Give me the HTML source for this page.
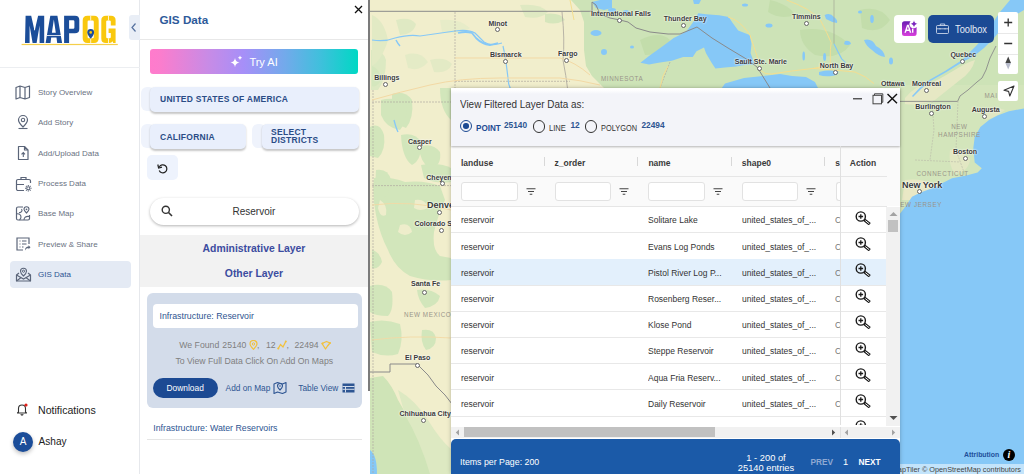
<!DOCTYPE html>
<html><head><meta charset="utf-8">
<style>
*{margin:0;padding:0;box-sizing:border-box}
html,body{width:1024px;height:474px;overflow:hidden;background:#fff;font-family:"Liberation Sans",sans-serif}
.abs{position:absolute}
#side{position:absolute;left:0;top:0;width:140px;height:474px;background:#fff;border-right:1px solid #e6e8ec}
.mi{position:absolute;left:15px;height:20px;width:120px;font-size:8px;color:#6a7282;white-space:nowrap}
.mi svg{position:absolute;left:0;top:0}
.mi span{position:absolute;left:23px;top:4px}
#panel{position:absolute;left:140px;top:0;width:228px;height:474px;background:#fff}
.btn{position:absolute;background:#e9effc;border-radius:5px;box-shadow:0 1.5px 2px rgba(0,0,0,.22);color:#2a4c86;font-weight:bold;font-size:9.7px;letter-spacing:.3px}
.btn span{transform:scaleX(.876);transform-origin:0 0;white-space:nowrap}
#map{position:absolute;left:370px;top:0;width:654px;height:474px;overflow:hidden;background:#f1ecd0}
.lbl{position:absolute;font-size:7.5px;color:#3a3a3a;font-weight:bold;white-space:nowrap;text-shadow:0 0 2px #fff,0 0 2px #fff}
.city{position:absolute;width:5px;height:5px;border:1px solid #666;background:#fff;border-radius:50%}
#dlg{position:absolute;left:451px;top:88px;width:449px;height:386px;background:#fff;box-shadow:0 0 4px rgba(0,0,0,.25)}
.th{position:absolute;top:158px;font-size:9.5px;font-weight:bold;color:#333}
.td{position:absolute;font-size:9.2px;color:#333;white-space:nowrap;transform:scaleX(.925);transform-origin:0 0;margin-top:.9px}
</style></head><body>

<!-- SIDEBAR -->
<div id="side">
  <div class="abs" style="left:0;top:67px;width:140px;height:1px;background:#eceef1"></div>
  <svg class="abs" style="left:0;top:0" width="130" height="50" viewBox="0 0 130 50">
  <path fill="#1b4d99" d="M25 43 L25.6 15.7 L31.2 15.7 L34.6 31 L38.1 15.7 L44.2 15.7 L44.2 43 L39.6 43 L39.6 25.5 L36.6 43 L32.6 43 L29.6 25.5 L29.6 43 Z"/>
  <path fill="#1b4d99" fill-rule="evenodd" d="M45.6 43 L50.3 15.7 L57.4 15.7 L62.1 43 L57.2 43 L56.5 37.5 L51.2 37.5 L50.5 43 Z M51.9 32.8 L55.8 32.8 L53.85 19.5 Z"/>
  <path fill="#1b4d99" fill-rule="evenodd" d="M64.1 43 L64.1 15.7 L75 15.7 Q79.3 15.7 79.3 20 L79.3 29 Q79.3 33.3 75 33.3 L69.1 33.3 L69.1 43 Z M69.1 20.3 L69.1 28.7 L73.2 28.7 Q74.4 28.7 74.4 27.5 L74.4 21.5 Q74.4 20.3 73.2 20.3 Z"/>
  <path fill="#f9c80e" fill-rule="evenodd" d="M87.5 15.7 L94 15.7 Q98.7 15.7 98.7 20.4 L98.7 38.3 Q98.7 43 94 43 L87.4 43 Q82.7 43 82.7 38.3 L82.7 20.4 Q82.7 15.7 87.5 15.7 Z M88.8 20.5 Q87.6 20.5 87.6 21.7 L87.6 37 Q87.6 38.2 88.8 38.2 L92.6 38.2 Q93.8 38.2 93.8 37 L93.8 21.7 Q93.8 20.5 92.6 20.5 Z"/>
  <path fill="#f9c80e" d="M106 15.7 L111 15.7 Q115.6 15.7 115.6 20.3 L115.6 25.5 L110.8 25.5 L110.8 21.6 Q110.8 20.4 109.6 20.4 L107.4 20.4 Q106.2 20.4 106.2 21.6 L106.2 37.1 Q106.2 38.3 107.4 38.3 L109.6 38.3 Q110.8 38.3 110.8 37.1 L110.8 33 L108.6 33 L108.6 28.5 L115.6 28.5 L115.6 43 L113.2 43 L112.6 41.3 Q111.6 43 109.5 43 L105.9 43 Q101.3 43 101.3 38.4 L101.3 20.3 Q101.3 15.7 106 15.7 Z"/>
  <path d="M34.6 15.7 V30 M47 35.5 H61 M90.7 15.7 V20.5 M90.7 38.2 V43 M108.5 15.7 V20.4 M108.5 38.3 V43" stroke="#fff" stroke-width=".8"/>
  <path fill="#1b4d99" d="M90.7 38.8 C88.6 36.1 87.3 34.3 87.3 32.5 A3.4 3.4 0 0 1 94.1 32.5 C94.1 34.3 92.8 36.1 90.7 38.8 Z"/>
  <circle cx="90.7" cy="32.4" r="1.3" fill="#f9c80e"/>
  <rect x="21.6" y="43.9" width="96.2" height="1.2" fill="#f5cf4a"/>
</svg>
  <div class="abs" style="left:128.5px;top:15px;width:11.5px;height:25px;background:#e9eef6;border-radius:3px 0 0 3px"></div>
  <svg class="abs" style="left:130px;top:22px" width="8" height="11" viewBox="0 0 8 11"><path d="M5.5 1.5 L2 5.5 L5.5 9.5" fill="none" stroke="#55719e" stroke-width="1.2"/></svg>

  <div class="mi" style="top:83.5px"><svg width="16" height="16" viewBox="0 0 16 16"><path d="M1 3.5 L5 2 L10 3.5 L14.5 2 V13.5 L10 15 L5 13.5 L1 15 Z M5 2 V13.5 M10 3.5 V15" fill="none" stroke="#5b6579" stroke-width="1.2" stroke-linejoin="round"/></svg><span>Story Overview</span></div>
  <div class="mi" style="top:114.3px"><svg width="16" height="16" viewBox="0 0 16 16"><path d="M8 13 C5 10 3.5 7.8 3.5 6 A4.5 4.5 0 0 1 12.5 6 C12.5 7.8 11 10 8 13 Z" fill="none" stroke="#5b6579" stroke-width="1.2"/><circle cx="8" cy="6" r="1.7" fill="none" stroke="#5b6579" stroke-width="1.1"/><path d="M3.5 14.5 H12.5" stroke="#5b6579" stroke-width="1.1"/></svg><span>Add Story</span></div>
  <div class="mi" style="top:145px"><svg width="16" height="16" viewBox="0 0 16 16"><path d="M3.5 1.5 H9.5 L13 5 V14.5 H3.5 Z M9.5 1.5 V5 H13" fill="none" stroke="#5b6579" stroke-width="1.2" stroke-linejoin="round"/><path d="M8.3 12 V7.5 M6.5 9.3 L8.3 7.5 L10 9.3" fill="none" stroke="#5b6579" stroke-width="1.1"/></svg><span>Add/Upload Data</span></div>
  <div class="mi" style="top:174.5px"><svg width="18" height="18" viewBox="0 0 18 18"><path d="M6 4.5 V2.5 H11 V4.5 M1.5 6 A1.5 1.5 0 0 1 3 4.5 H14 A1.5 1.5 0 0 1 15.5 6 V8 M1.5 6 V14 A1.5 1.5 0 0 0 3 15.5 H9 M1.5 9.5 H9" fill="none" stroke="#5b6579" stroke-width="1.2"/><circle cx="13.3" cy="13.3" r="1.6" fill="none" stroke="#5b6579" stroke-width="1.1"/><path d="M13.3 10 V11 M13.3 15.6 V16.6 M10 13.3 H11 M15.6 13.3 H16.6 M11 11 L11.7 11.7 M14.9 14.9 L15.6 15.6 M11 15.6 L11.7 14.9 M14.9 11.7 L15.6 11" stroke="#5b6579" stroke-width="1.1"/></svg><span>Process Data</span></div>
  <div class="mi" style="top:205px"><svg width="17" height="17" viewBox="0 0 17 17"><path d="M8 2 H3 A1.5 1.5 0 0 0 1.5 3.5 V13.5 A1.5 1.5 0 0 0 3 15 H13 A1.5 1.5 0 0 0 14.5 13.5 V10" fill="none" stroke="#5b6579" stroke-width="1.2"/><path d="M1.5 9 C4 8 6 10 6 12 C6 13.5 5 14.5 4.5 15 M6.5 4 C8 6 6 8 4 7.5 M9 15 C9 12 11 11 14.5 11.5" fill="none" stroke="#5b6579" stroke-width="1.1"/><path d="M11.5 8 C10 6.5 9 5.5 9 4.3 A2.5 2.5 0 0 1 14 4.3 C14 5.5 13 6.5 11.5 8 Z" fill="none" stroke="#5b6579" stroke-width="1.1"/><circle cx="11.5" cy="4.3" r=".9" fill="#5b6579"/></svg><span>Base Map</span></div>
  <div class="mi" style="top:236px"><svg width="16" height="16" viewBox="0 0 16 16"><path d="M8 14 H2 V2 H14 V8" fill="none" stroke="#5b6579" stroke-width="1.2"/><path d="M4.5 5 H5.5 M7 5 H11.5 M4.5 8 H5.5 M7 8 H11.5 M4.5 11 H5.5 M7 11 H8.5" stroke="#5b6579" stroke-width="1.1"/><path d="M10 14.5 C10 11.5 11.5 10.5 13.5 10.5 V9.3 L15.5 11.3 L13.5 13.3 V12 C12 12 11 12.8 10 14.5 Z" fill="#5b6579"/></svg><span>Preview &amp; Share</span></div>
  <div class="abs" style="left:10px;top:261px;width:120.7px;height:26.8px;background:#e4eaf4;border-radius:4px"></div>
  <div class="mi" style="top:266px;color:#2e5592"><svg width="17" height="17" viewBox="0 0 17 17"><path d="M4 7 L1.5 9 V15 H15.5 V9 L13 7" fill="none" stroke="#5b6579" stroke-width="1.2" stroke-linejoin="round"/><path d="M1.5 9 L8.5 13 L15.5 9 M1.5 15 L6.5 11.2 M15.5 15 L10.5 11.2" fill="none" stroke="#5b6579" stroke-width="1.1"/><path d="M8.5 10 C6.5 8 5.5 6.8 5.5 5.2 A3 3 0 0 1 11.5 5.2 C11.5 6.8 10.5 8 8.5 10 Z" fill="#e4eaf4" stroke="#5b6579" stroke-width="1.1"/><circle cx="8.5" cy="5.2" r="1.1" fill="none" stroke="#5b6579" stroke-width="1"/></svg><span>GIS Data</span></div>

  <svg class="abs" style="left:16px;top:402px" width="12" height="14" viewBox="0 0 12 14"><path d="M2.5 10 V6.5 A3.5 3.5 0 0 1 9.5 6.5 V10 L10.5 11 H1.5 Z M4.8 12.3 A1.3 1.3 0 0 0 7.2 12.3" fill="none" stroke="#333" stroke-width="1.1" stroke-linejoin="round"/><circle cx="10" cy="3" r="1.6" fill="#e0201a"/></svg>
  <div class="abs" style="left:38px;top:404px;font-size:10.6px;color:#222">Notifications</div>
  <div class="abs" style="left:13px;top:432px;width:20px;height:20px;border-radius:50%;background:#1b4d99;box-shadow:0 2px 4px rgba(0,0,0,.25);color:#fff;font-size:10px;text-align:center;line-height:20px">A</div>
  <div class="abs" style="left:38.6px;top:436px;font-size:10.1px;color:#222">Ashay</div>
</div>

<!-- PANEL -->
<div id="panel">
  <div class="abs" style="left:19.5px;top:12.5px;font-size:11.7px;font-weight:bold;color:#2d5a9a">GIS Data</div>
  <svg class="abs" style="left:214px;top:5px" width="9" height="9" viewBox="0 0 9 9"><path d="M1 1 L8 8 M8 1 L1 8" stroke="#111" stroke-width="1.3"/></svg>
  <div class="abs" style="left:0;top:39px;width:228px;height:1px;background:#e8e8e8"></div>
  <div class="abs" style="left:10px;top:49px;width:208px;height:25px;border-radius:3px;background:linear-gradient(90deg,#ff7bcc 0%,#fb7dcd 5%,#c88be6 28%,#a68ff8 45%,#72aaeb 65%,#3fc0dc 82%,#00d8c4 100%)"></div>
  <svg class="abs" style="left:90px;top:55px" width="13" height="13" viewBox="0 0 13 13"><path d="M5 3 Q5.6 7 9.5 7.6 Q5.6 8.2 5 12.2 Q4.4 8.2 0.5 7.6 Q4.4 7 5 3 Z" fill="#fff"/><path d="M10 0.5 Q10.3 2.4 12.2 2.7 Q10.3 3 10 4.9 Q9.7 3 7.8 2.7 Q9.7 2.4 10 0.5 Z" fill="#fff"/></svg>
  <div class="abs" style="left:109.4px;top:55.5px;font-size:11px;color:#fff">Try AI</div>

  <div class="abs" style="left:0.5px;top:87px;width:14px;height:24px;background:#eff3fc;border-radius:6px"></div>
  <div class="btn" style="left:10px;top:87px;width:209px;height:25px"><span class="abs" style="left:9.5px;top:6px">UNITED STATES OF AMERICA</span></div>
  <div class="abs" style="left:0.5px;top:124px;width:14px;height:24px;background:#eff3fc;border-radius:6px"></div>
  <div class="btn" style="left:10px;top:124px;width:96px;height:25px"><span class="abs" style="left:9.5px;top:6.5px">CALIFORNIA</span></div>
  <div class="abs" style="left:112px;top:124px;width:14px;height:24px;background:#eff3fc;border-radius:6px"></div>
  <div class="btn" style="left:121.5px;top:124px;width:97px;height:25px;line-height:8.3px"><span class="abs" style="left:9.5px;top:4px;font-size:8.5px;transform:none">SELECT<br>DISTRICTS</span></div>
  <div class="abs" style="left:7px;top:155px;width:31px;height:25px;background:#eef3fd;border-radius:5px"></div>
  <svg class="abs" style="left:16.5px;top:163px" width="12" height="12" viewBox="0 0 12 12"><path d="M2.3 4 A4 4 0 1 1 2.2 7.5" fill="none" stroke="#222" stroke-width="1.2"/><path d="M0.8 1.5 L1.6 5 L5 4.2" fill="none" stroke="#222" stroke-width="1.2"/></svg>

  <div class="abs" style="left:10px;top:197.5px;width:208.5px;height:27px;border-radius:14px;background:#fff;box-shadow:0 1px 3px rgba(0,0,0,.3)"></div>
  <svg class="abs" style="left:21px;top:205px" width="12" height="12" viewBox="0 0 12 12"><circle cx="4.8" cy="4.8" r="3.6" fill="none" stroke="#333" stroke-width="1.4"/><path d="M7.5 7.5 L11 11" stroke="#333" stroke-width="1.6"/></svg>
  <div class="abs" style="left:92.5px;top:205.5px;font-size:10px;color:#333">Reservoir</div>

  <div class="abs" style="left:0;top:235px;width:228px;height:51.5px;background:#f2f2f2"></div>
  <div class="abs" style="left:0;top:243px;width:228px;text-align:center;font-size:10.4px;font-weight:bold;color:#3c4ca0">Administrative Layer</div>
  <div class="abs" style="left:0;top:268.2px;width:228px;text-align:center;font-size:10.4px;font-weight:bold;color:#3c4ca0">Other Layer</div>

  <div class="abs" style="left:7px;top:293px;width:214.5px;height:114.5px;background:#d3dcea;border-radius:6px"></div>
  <div class="abs" style="left:13px;top:304px;width:204.5px;height:23.5px;background:#fff;border-radius:4px"></div>
  <div class="abs" style="left:19.5px;top:311px;font-size:8.8px;color:#2d5490">Infrastructure: Reservoir</div>
  <div class="abs" style="left:39.3px;top:340px;font-size:8.7px;color:#808080;white-space:nowrap">We Found</div>
  <div class="abs" style="left:82.3px;top:340px;font-size:8.7px;color:#808080;white-space:nowrap">25140</div>
  <svg class="abs" style="left:109px;top:339.5px" width="9" height="10" viewBox="0 0 9 10"><path d="M4.5 9.3 C2.3 7 1 5.5 1 4 A3.5 3.5 0 0 1 8 4 C8 5.5 6.7 7 4.5 9.3 Z" fill="none" stroke="#f2c13c" stroke-width="1.2"/><circle cx="4.5" cy="4" r="1.2" fill="none" stroke="#f2c13c" stroke-width="1"/></svg>
  <div class="abs" style="left:117px;top:340px;font-size:8.7px;color:#808080">,</div>
  <div class="abs" style="left:125.9px;top:340px;font-size:8.7px;color:#808080">12</div>
  <svg class="abs" style="left:136.8px;top:339.5px" width="10" height="10" viewBox="0 0 10 10"><path d="M1 9 L3.5 4.5 L6 7 L9 1" fill="none" stroke="#f2c13c" stroke-width="1.3"/><circle cx="1.3" cy="8.5" r="1" fill="#f2c13c"/><circle cx="8.8" cy="1.4" r="1" fill="#f2c13c"/></svg>
  <div class="abs" style="left:146.5px;top:340px;font-size:8.7px;color:#808080">,</div>
  <div class="abs" style="left:154.5px;top:340px;font-size:8.7px;color:#808080">22494</div>
  <svg class="abs" style="left:181px;top:339.5px" width="10" height="10" viewBox="0 0 10 10"><path d="M1 3.5 L5.5 1.5 L9 3 L6.5 6 L4.5 9 Z" fill="none" stroke="#f2c13c" stroke-width="1.3" stroke-linejoin="round"/><circle cx="1.5" cy="3.5" r="1" fill="#f2c13c"/><circle cx="9" cy="3" r="1" fill="#f2c13c"/></svg>
  <div class="abs" style="left:7px;top:355.9px;width:214.5px;text-align:center;font-size:8.7px;color:#808080;white-space:nowrap">To View Full Data Click On Add On Maps</div>

  <div class="abs" style="left:12.7px;top:377.5px;width:65px;height:20px;border-radius:10px;background:#1c4a93;color:#fff;font-size:8.4px;text-align:center;line-height:20px">Download</div>
  <div class="abs" style="left:85.6px;top:383px;font-size:8.3px;color:#2d5592;white-space:nowrap">Add on Map</div>
  <svg class="abs" style="left:133px;top:381px" width="14" height="13" viewBox="0 0 14 13"><path d="M1 3 L4.5 1.5 L9.5 3 L13 1.5 V11 L9.5 12.5 L4.5 11 L1 12.5 Z" fill="none" stroke="#2d5592" stroke-width="1.1" stroke-linejoin="round"/><path d="M7 9 C5.3 7.3 4.5 6.3 4.5 5 A2.5 2.5 0 0 1 9.5 5 C9.5 6.3 8.7 7.3 7 9 Z" fill="#d3dcea" stroke="#2d5592" stroke-width="1.1"/><circle cx="7" cy="5" r=".8" fill="#2d5592"/></svg>
  <div class="abs" style="left:158.3px;top:383px;font-size:8.3px;color:#2d5592;white-space:nowrap">Table View</div>
  <svg class="abs" style="left:201.5px;top:383px" width="13" height="10" viewBox="0 0 13 10"><rect x="0.5" y="0.5" width="12" height="9" fill="#2d5592"/><path d="M0.5 3.5 H12.5 M0.5 6.3 H12.5 M3.5 3.5 V9.5" stroke="#d3dcea" stroke-width="1"/></svg>

  <div class="abs" style="left:13.2px;top:422.5px;font-size:8.8px;color:#2d5592;white-space:nowrap">Infrastructure: Water Reservoirs</div>
  <div class="abs" style="left:7px;top:439px;width:214.5px;height:1px;background:#e5e5e5"></div>
</div>
<div class="abs" style="left:368px;top:0;width:2.5px;height:391px;background:#7b7b7b"></div>

<!-- MAP -->
<div id="map">
<svg class="abs" style="left:0;top:0" width="654" height="474" viewBox="370 0 654 474">
<rect x="370" y="0" width="654" height="474" fill="#f1eecc"/>
<!-- NE green -->
<path d="M571 0 L580 10 L584 22 L584 50 L586 66 L592 76 L604 88 L620 95 L900 95 L900 88 L1024 88 L1024 0 Z" fill="#cde3b7"/>
<path d="M895 85 L1024 85 L1024 215 L895 215 Z" fill="#d3e5bb"/>
<!-- darker forest patches -->
<path d="M640 40 Q660 30 670 40 Q665 55 645 55 Z" fill="#c3ddab"/>
<path d="M800 30 Q830 25 850 45 Q840 60 815 55 Q800 45 800 30 Z" fill="#c3ddab"/>
<path d="M860 10 Q880 5 890 20 Q880 35 862 28 Z" fill="#c3ddab"/>
<path d="M770 0 Q790 5 795 15 Q780 20 768 12 Z" fill="#c3ddab"/>
<!-- urban/agri beige NE -->
<path d="M905 98 Q915 85 930 84 Q945 76 958 68 Q968 62 975 60 Q972 72 960 80 Q945 92 935 100 Q920 106 905 104 Z" fill="#e6e8c4"/>
<path d="M905 180 Q920 178 935 184 Q925 195 910 200 L902 200 Z" fill="#e9e8c5"/>
<path d="M950 150 Q962 148 970 160 Q968 172 955 174 Q948 165 950 150 Z" fill="#e2e7c3"/>
<path d="M985 110 Q995 106 1005 110 Q995 118 985 120 Z" fill="#e2e7c3"/>
<!-- left greens -->
<path d="M370 127 Q380 122 384 135 Q386 150 378 158 L370 156 Z" fill="#d2e6bb"/>
<path d="M392 94 Q405 90 412 100 Q414 118 406 128 Q396 125 392 112 Z" fill="#d2e6bb"/>
<path d="M419 147 Q432 142 440 152 Q442 166 430 169 Q420 162 419 147 Z" fill="#d2e6bb"/>
<path d="M440 88 L451 88 L451 120 Q440 110 440 88 Z" fill="#d2e6bb"/>
<path d="M374 178 Q390 176 405 182 Q425 180 440 186 L445 200 Q438 215 434 232 Q432 250 440 256 L451 258 L451 280 Q430 282 410 276 Q395 268 388 250 Q380 235 376 215 Q372 195 374 178 Z" fill="#d2e6bb"/>
<path d="M380 200 Q388 205 386 215 Q380 218 378 208 Z M400 225 Q410 222 412 232 Q405 238 398 232 Z M415 200 Q425 198 428 208 Q420 212 414 208 Z" fill="#eeedcb"/>
<path d="M370 286 Q385 282 392 292 Q394 310 388 316 Q375 316 370 312 Z" fill="#d2e6bb"/>
<path d="M417 290 Q430 288 440 296 Q438 306 425 308 Q418 300 417 290 Z" fill="#d2e6bb"/>
<path d="M370 322 Q385 318 400 324 Q404 340 398 354 Q385 358 372 352 Z" fill="#d2e6bb"/>
<path d="M422 330 Q434 328 436 338 Q436 348 426 350 Q420 342 422 330 Z" fill="#d2e6bb"/>
<path d="M370 378 L383 376 Q392 385 398 400 Q410 420 420 440 Q428 455 432 474 L370 474 Z" fill="#cfe4b7"/>
<path d="M398 390 Q415 400 428 420 Q440 440 452 450 L452 474 L430 474 Q420 440 405 415 Z" fill="#dde9c2"/>
<path d="M372 250 Q380 252 382 262 Q378 270 372 268 Z" fill="#d2e6bb"/>
<path d="M370 450 Q377 455 377 474 L370 474 Z" fill="#86c8f7"/>
<path d="M381 100 Q395 96 406 104 Q408 122 400 130 Q386 128 381 115 Z" fill="#d2e6bb"/>
<path d="M401 135 Q415 132 421 142 Q422 160 412 165 Q402 158 401 135 Z" fill="#d2e6bb"/>
<path d="M421 165 Q440 162 451 168 L451 182 Q435 184 424 178 Z" fill="#d2e6bb"/>
<path d="M376 170 Q388 168 391 180 Q390 196 380 200 Q374 190 376 170 Z" fill="#d2e6bb"/>
<path d="M371 50 Q382 48 386 60 Q386 80 378 90 L371 90 Z" fill="#dce9c2"/>
<path d="M396 20 Q410 16 416 24 Q414 34 400 35 Z" fill="#dfe9c3"/>
<path d="M430 60 Q445 56 452 64 Q448 74 434 72 Z" fill="#e3eac5"/>
<!-- top-left faint greens -->
<path d="M372 15 Q384 20 388 40 Q382 60 372 66 Z" fill="#e2eac4"/>
<path d="M372 66 Q382 70 380 82 Q375 88 372 86 Z" fill="#d4e7bd"/>
<path d="M405 55 Q420 50 428 62 Q420 72 408 68 Z" fill="#e4ebc6"/>
<path d="M520 5 Q540 3 548 12 Q540 20 525 17 Z" fill="#dfe9c2"/>
<path d="M545 14 Q560 12 565 20 Q555 26 545 22 Z" fill="#d6e6bc"/>
<path d="M440 20 Q460 18 470 28 Q460 36 442 32 Z" fill="#e7ecc8"/>
<!-- Lake Superior -->
<path d="M640.4 62.7 L649 56 L662.3 46.5 L673.7 38 L681.3 34.2 L687 30.4 L692.7 22.8 L698.3 13.3 L706 14.2 L719.2 15.2 L728.7 17.1 L732.5 22.8 L738.2 30.4 L749.6 35.1 L751.5 43.7 L750.6 53.2 L753.4 60.8 L755.3 64.6 L747.7 64.6 L736.3 66.5 L725 67.4 L715.4 68.4 L711.6 62.7 L706 53.2 L704 47.5 L696.5 51.3 L692.7 57 L683.2 57 L671.8 60.8 L658.5 62.7 L649 64.6 Z" fill="#86c8f7"/>
<path d="M693 0 L701 0 L699 4 L694 4 Z" fill="#86c8f7"/>
<!-- Lake Michigan/Huron -->
<path d="M719 92 L725 83.5 L744 78 L763 76 L780 74 L792 76 L806 77 L815 82 L820 92 Z" fill="#86c8f7"/>
<!-- small lakes -->
<path d="M592 2 L600 0 L612 0 L612 8 L604 10 L596 8 Z" fill="#86c8f7"/>
<ellipse cx="596" cy="33" rx="5.5" ry="3" fill="#86c8f7"/>
<ellipse cx="604" cy="52" rx="3" ry="3" fill="#86c8f7"/>
<ellipse cx="612" cy="10" rx="4" ry="2" fill="#86c8f7"/>
<ellipse cx="632" cy="47" rx="2" ry="1.5" fill="#86c8f7"/>
<ellipse cx="626" cy="12" rx="3" ry="2" fill="#86c8f7"/>
<path d="M824.6 15 Q830 12 834 17 Q838 20 837 23 Q831 22 826 19 Z" fill="#86c8f7"/>
<path d="M845 41 Q850 40 851 44 Q847 46 844 44 Z" fill="#86c8f7"/>
<path d="M864 40 Q872 38 876 46 Q884 50 885 57 Q878 56 872 50 Q866 46 864 40 Z" fill="#86c8f7"/>
<ellipse cx="872" cy="19" rx="1.8" ry="4" fill="#86c8f7"/>
<ellipse cx="891" cy="61" rx="2" ry="3.5" fill="#86c8f7"/>
<ellipse cx="769" cy="25.5" rx="3.5" ry="2" fill="#86c8f7"/>
<ellipse cx="803.7" cy="56" rx="1.3" ry="4.5" fill="#86c8f7"/>
<ellipse cx="824.6" cy="57" rx="1.5" ry="4" fill="#86c8f7"/>
<path d="M819 72 Q828 69 838 71 Q840 75 832 76 Q824 77 819 75 Z" fill="#86c8f7"/>
<path d="M834 43.7 Q838 52 841.7 58.9 L845.5 62.7" fill="none" stroke="#86c8f7" stroke-width="1.2"/>
<ellipse cx="860" cy="12" rx="2" ry="1.5" fill="#86c8f7"/>
<ellipse cx="896" cy="30" rx="1.5" ry="3" fill="#86c8f7"/>
<ellipse cx="745" cy="5" rx="3" ry="1.5" fill="#86c8f7"/>
<!-- St Lawrence -->
<path d="M1010 0 L1000 12 L992 24 L985 36 L976 46 L968 54 L962 60 L945 71 L930 79.5 L920 87.5 L912 96 L913 97 L921 89 L931 80.8 L946 72.2 L963.5 61.5 L974 56 L984 48 L994 38 L1004 26 L1014 16 L1024 10 L1024 0 Z" fill="#86c8f7"/>

<!-- ocean -->
<path d="M1024 108.5 L1008.9 111.3 L997.5 115.6 L989 119.9 L980.4 127 L974.7 137 L973.3 148.3 L974.7 162.6 L981.8 168.3 L977.6 172.5 L966.2 175.4 L952 178.2 L940.6 183.9 L932 188.2 L920.6 192.5 L912 196.7 L906.4 205.3 L899 215 L899 474 L1024 474 Z" fill="#86c8f7"/>
<!-- rivers -->
<path d="M372 40 Q385 42 395 38 Q410 34 420 36 L455 31 Q468 29 475 33 Q480 38 484 42 Q490 46 498 44 L502 43" fill="none" stroke="#86c8f7" stroke-width="1.2"/>
<path d="M458 33 Q466 31 472 33 L476 38 Q482 44 490 45 L498 43" fill="none" stroke="#86c8f7" stroke-width="1.8"/>
<path d="M396 40 Q398 44 400 46" fill="none" stroke="#86c8f7" stroke-width="1.5"/>
<path d="M503 46 Q505 55 506 62 Q507 70 508 78 Q508 84 511 90" fill="none" stroke="#86c8f7" stroke-width="1.2"/>
<path d="M394 120 Q396 128 398 132" fill="none" stroke="#86c8f7" stroke-width="1.3"/>
<!-- borders -->
<path d="M370 11.3 L592 11.3 L592 2 L596 5 L600 14 L610 18 L620 20 L628 22 L636 28 L650 32 L668 34 L680 34 L697 27 L712 38 L728 48 L748 60 L757 67 L762 75 L770 88" fill="none" stroke="#8a8a8a" stroke-width="1"/>
<path d="M455 12 V88 M455 81.3 H570 M372 102 H451 M372 185.6 H451" fill="none" stroke="#b0aba0" stroke-width=".7" stroke-dasharray="2 1"/>
<path d="M562 12 Q565 40 563 60 Q566 75 568 92" fill="none" stroke="#a9a49c" stroke-width=".8"/>
<path d="M834 0 V43.7" stroke="#9aa090" stroke-width=".6"/>
<path d="M996 46 L990 58 L986 70 L982 78 L977 82 L968 90 L960 96 L957.6 101.4 L900 101.4" fill="none" stroke="#8a8a8a" stroke-width=".9"/><path d="M932 101 L934 130 L930 160 M958 101 L956 150 L965 175 M915 160 L960 162" fill="none" stroke="#b8b8a8" stroke-width=".6" stroke-dasharray="2 1"/>
<path d="M373 90 V474 M670 62 L660 88" fill="none" stroke="#b0aba0" stroke-width=".7" stroke-dasharray="2 1"/>
<path d="M370 372 L390 372 L390 364 L417 364 L428 375 L436 386 L445 395 L452 404" fill="none" stroke="#8a8a8a" stroke-width="1"/>
<!-- roads -->
<path d="M372 100 Q400 92 430 85 Q460 78 500 78 L560 78 Q580 80 600 85" fill="none" stroke="#f3d9a5" stroke-width="1"/>
<path d="M455 58 L560 58 Q575 62 590 75" fill="none" stroke="#f3d9a5" stroke-width="1"/>
<path d="M372 205 Q410 200 451 210" fill="none" stroke="#f3d9a5" stroke-width=".9"/>
<path d="M372 340 Q410 335 451 338" fill="none" stroke="#f3d9a5" stroke-width=".9"/>
<path d="M786.6 0 Q800 5 807.5 9.5 Q816 15 820.8 20.9 Q824 27 826.5 32.3 L831.2 42.7 Q830 50 830.3 55 L830.3 64.6 Q822 67 813.2 68.4 Q790 71 771.4 74 Q765 75 760 70 M813 68.4 Q835 70 855 72 Q866 76 874 83.6 M570 0 Q572 10 574 20 M660 88 Q662 75 668 66 M728 17 Q740 20 750 35 Q755 50 760 65" fill="none" stroke="#f5de90" stroke-width="1"/>
</svg>
<div class="lbl" style="left:118.4px;top:19.5px;font-size:7px">Minot</div>
<div class="city" style="left:124.7px;top:26.8px"></div>
<div class="lbl" style="left:120.0px;top:51.2px;font-size:7px">Bismarck</div>
<div class="city" style="left:133.0px;top:59.3px"></div>
<div class="lbl" style="left:188.0px;top:49.8px;font-size:7px">Fargo</div>
<div class="city" style="left:194.3px;top:57.5px"></div>
<div class="lbl" style="left:4.2px;top:74.4px;font-size:7px">Billings</div>
<div class="city" style="left:13.4px;top:82.2px"></div>
<div class="lbl" style="left:220.9px;top:10.3px;font-size:7px">International Falls</div>
<div class="city" style="left:246.9px;top:17.5px"></div>
<div class="lbl" style="left:293.8px;top:14.7px;font-size:7px">Thunder Bay</div>
<div class="city" style="left:311.2px;top:22.5px"></div>
<div class="lbl" style="left:422.0px;top:12.5px;font-size:7px">Timmins</div>
<div class="city" style="left:433.8px;top:21.1px"></div>
<div class="lbl" style="left:364.8px;top:57.7px;font-size:7px">Sault Ste. Marie</div>
<div class="city" style="left:387.2px;top:66.0px"></div>
<div class="lbl" style="left:449.8px;top:62.0px;font-size:7px">North Bay</div>
<div class="city" style="left:462.5px;top:70.4px"></div>
<div class="lbl" style="left:580.4px;top:51.0px;font-size:7px">Quebec</div>
<div class="city" style="left:590.1px;top:59.3px"></div>
<div class="lbl" style="left:511.0px;top:80.0px;font-size:7px">Ottawa</div>
<div class="lbl" style="left:542.0px;top:79.7px;font-size:7px">Montreal</div>
<div class="city" style="left:553.5px;top:87.9px"></div>
<div class="lbl" style="left:545.3px;top:102.6px;font-size:7px">Burlington</div>
<div class="city" style="left:559.0px;top:110.5px"></div>
<div class="lbl" style="left:601.7px;top:106.0px;font-size:7px">Augusta</div>
<div class="city" style="left:612.0px;top:113.9px"></div>
<div class="lbl" style="left:583.0px;top:148.2px;font-size:7px">Boston</div>
<div class="city" style="left:592.5px;top:156.0px"></div>
<div class="lbl" style="left:532.0px;top:179.5px;font-size:9px">New York</div>
<div class="city" style="left:547.0px;top:189.4px"></div>
<div class="lbl" style="left:38.0px;top:138.0px;font-size:7px">Casper</div>
<div class="city" style="left:47.0px;top:145.1px"></div>
<div class="lbl" style="left:56.3px;top:173.9px;font-size:7px">Cheyen</div>
<div class="city" style="left:70.3px;top:181.0px"></div>
<div class="lbl" style="left:57.1px;top:199.5px;font-size:9px">Denve</div>
<div class="city" style="left:67.3px;top:209.7px"></div>
<div class="lbl" style="left:44.5px;top:220.4px;font-size:7px">Colorado S</div>
<div class="city" style="left:69.4px;top:227.5px"></div>
<div class="lbl" style="left:41.0px;top:280.0px;font-size:7px">Santa Fe</div>
<div class="city" style="left:52.2px;top:289.7px"></div>
<div class="lbl" style="left:35.0px;top:353.8px;font-size:7px">El Paso</div>
<div class="city" style="left:44.6px;top:362.5px"></div>
<div class="lbl" style="left:29.5px;top:410.0px;font-size:7px">Chihuahua City</div>
<div class="city" style="left:50.9px;top:417.9px"></div>
<div class="lbl" style="left:231.0px;top:75.0px;font-size:6.3px;color:#9a958a;letter-spacing:.6px;text-shadow:none;font-weight:normal">MINNESOTA</div>
<div class="lbl" style="left:34.0px;top:311.0px;font-size:6.3px;color:#9a958a;letter-spacing:.6px;text-shadow:none;font-weight:normal">NEW MEXICO</div>
<div class="lbl" style="left:530.2px;top:200.5px;font-size:6.3px;color:#9a958a;letter-spacing:.6px;text-shadow:none;font-weight:normal">EW JERSEY</div>
<div class="lbl" style="left:546.4px;top:169.5px;font-size:6.3px;color:#9a958a;letter-spacing:.6px;text-shadow:none;font-weight:normal">CONNECTICUT</div>
<div class="lbl" style="left:614.5px;top:92.0px;font-size:6.3px;color:#9a958a;letter-spacing:.6px;text-shadow:none;font-weight:normal">MAI</div>
<div class="lbl" style="left:568px;top:123px;font-size:6.3px;color:#9a958a;letter-spacing:.6px;text-shadow:none;font-weight:normal;line-height:7.5px;text-align:center">NEW<br>HAMPSHIRE</div>
</div>


<!-- MAP CONTROLS -->
<div class="abs" style="left:893.5px;top:14.5px;width:31.5px;height:28.5px;background:#fff;border-radius:4px"></div>
<svg class="abs" style="left:900px;top:18px" width="20" height="20" viewBox="900 18 20 20"><defs><linearGradient id="aig" x1="0" y1="0" x2="0" y2="1"><stop offset="0" stop-color="#6a1db4"/><stop offset="1" stop-color="#d93fdc"/></linearGradient></defs>
<path d="M904.5 21.3 H910.5 A3.8 3.8 0 0 0 916.6 27 V33.5 A2.5 2.5 0 0 1 914.1 36 H904.5 A2.5 2.5 0 0 1 902 33.5 V23.8 A2.5 2.5 0 0 1 904.5 21.3 Z" fill="url(#aig)"/>
<path d="M914 20.2 Q914.4 23.3 917.5 23.8 Q914.4 24.3 914 27.4 Q913.6 24.3 910.5 23.8 Q913.6 23.3 914 20.2 Z" fill="#7a24bd"/>
<path fill="#fff" fill-rule="evenodd" d="M904.4 32.7 L907 24.7 L908.7 24.7 L911.3 32.7 L909.8 32.7 L909.2 30.9 L906.5 30.9 L905.9 32.7 Z M906.9 29.6 L908.8 29.6 L907.85 26.4 Z"/>
<rect x="912" y="28.6" width="1.4" height="4.1" fill="#fff"/>
</svg>
<div class="abs" style="left:928px;top:14.5px;width:65.5px;height:28.5px;background:#1b4a94;border-radius:5px"></div>
<svg class="abs" style="left:935.5px;top:23px" width="13" height="11" viewBox="0 0 13 11"><rect x="0.5" y="2.5" width="12" height="8" rx="1" fill="none" stroke="#dfe6f3" stroke-width=".8"/><path d="M4.3 2.5 V1 H8.7 V2.5 M0.5 5.8 H12.5 M4 5.2 V6.4 M9 5.2 V6.4" fill="none" stroke="#dfe6f3" stroke-width=".8"/></svg>
<div class="abs" style="left:954.7px;top:23.6px;font-size:10.2px;color:#e6ecf6;transform:scaleX(.91);transform-origin:0 0">Toolbox</div>
<div class="abs" style="left:998.3px;top:12px;width:20.2px;height:61.7px;background:#fff;border-radius:2px"></div>
<div class="abs" style="left:998.3px;top:33.2px;width:20.2px;height:1px;background:#e8e8e8"></div>
<div class="abs" style="left:998.3px;top:54px;width:20.2px;height:1px;background:#e8e8e8"></div>
<svg class="abs" style="left:998.3px;top:12px" width="21" height="62" viewBox="0 0 21 62"><path d="M6.2 10.5 H14.2 M10.2 6.5 V14.5 M6.2 31.5 H14.2" stroke="#333" stroke-width="1.3"/><path d="M10.2 44.5 L13 51 H7.4 Z" fill="#444"/><path d="M10.2 57.5 L13 51 H7.4 Z" fill="#b8bccc"/></svg>
<div class="abs" style="left:998.3px;top:80.7px;width:20.2px;height:20.2px;background:#fff;border-radius:2px"></div>
<svg class="abs" style="left:1002.5px;top:84.5px" width="12" height="12" viewBox="0 0 12 12"><path d="M11 1 L1 5.3 L5.6 6.4 L6.8 11 Z" fill="none" stroke="#333" stroke-width="1.1" stroke-linejoin="round"/></svg>

<!-- ATTRIBUTION -->
<div class="abs" style="left:964.3px;top:450.3px;font-size:7.4px;font-weight:bold;color:#1f4f9a;transform:scaleX(.93);transform-origin:0 0">Attribution</div>
<div class="abs" style="left:1002.8px;top:449px;width:12.4px;height:12.4px;border-radius:50%;background:#000;color:#fff;font-family:'Liberation Serif',serif;font-style:italic;font-weight:bold;font-size:10px;text-align:center;line-height:12.4px">i</div>
<div class="abs" style="left:899.5px;top:464.3px;width:124.5px;height:9.7px;background:rgba(255,255,255,.5);overflow:hidden"><div class="abs" style="right:3px;top:0.8px;font-size:7.3px;color:#444;white-space:nowrap">MapTiler © OpenStreetMap contributors</div></div>

<!-- DIALOG -->
<div id="dlg">
<div class="abs" style="left:0;top:58px;width:449px;height:60px;background:#fafafa"></div>
<div class="abs" style="left:0;top:-0.5px;width:449px;height:58.5px;background:linear-gradient(180deg,#fff 0,#fff 2px,#f3f4f9 6px);box-shadow:0 1px 2px rgba(0,0,0,.28)"></div>
<div class="abs" style="left:9px;top:9.5px;font-size:10.8px;color:#333;transform:scaleX(.917);transform-origin:0 0;white-space:nowrap">View Filtered Layer Data as:</div>
<div class="abs" style="left:9px;top:32px;width:12px;height:12px;border:1.3px solid #1c4a93;border-radius:50%"></div><div class="abs" style="left:12.2px;top:35.2px;width:5.6px;height:5.6px;background:#1c4a93;border-radius:50%"></div>
<div class="abs" style="left:24.5px;top:34.5px;font-size:9px;font-weight:bold;color:#1c4a93;transform:scaleX(.9);transform-origin:0 0">POINT</div>
<div class="abs" style="left:53px;top:32px;font-size:8.3px;font-weight:bold;color:#2d5592">25140</div>
<div class="abs" style="left:81.5px;top:32px;width:12.5px;height:12.5px;border:1.2px solid #333;border-radius:50%"></div>
<div class="abs" style="left:97.5px;top:34.8px;font-size:8.8px;color:#333;transform:scaleX(.86);transform-origin:0 0">LINE</div>
<div class="abs" style="left:119.5px;top:32px;font-size:8.3px;font-weight:bold;color:#2d5592">12</div>
<div class="abs" style="left:133.8px;top:32px;width:12.5px;height:12.5px;border:1.2px solid #333;border-radius:50%"></div>
<div class="abs" style="left:149.7px;top:34.8px;font-size:8.8px;color:#333;transform:scaleX(.84);transform-origin:0 0">POLYGON</div>
<div class="abs" style="left:190.5px;top:32px;font-size:8.3px;font-weight:bold;color:#2d5592">22494</div>
<svg class="abs" style="left:400px;top:5px" width="48" height="12" viewBox="0 0 48 12"><path d="M2 5.8 H11" stroke="#222" stroke-width="1.1"/><rect x="22" y="2.3" width="8.5" height="8.5" fill="none" stroke="#444" stroke-width="1"/><path d="M23.5 2.3 V0.8 H31.8 V9.3 H30.5" fill="none" stroke="#444" stroke-width="1"/><path d="M36.5 1 L46 10.3 M46 1 L36.5 10.3" stroke="#111" stroke-width="1.4"/></svg>
<div class="abs" style="left:10px;top:69.5px;font-size:8.5px;font-weight:bold;color:#3a3a3a">landuse</div>
<div class="abs" style="left:103.6px;top:69.5px;font-size:8.5px;font-weight:bold;color:#3a3a3a">z_order</div>
<div class="abs" style="left:197.4px;top:69.5px;font-size:8.5px;font-weight:bold;color:#3a3a3a">name</div>
<div class="abs" style="left:290.8px;top:69.5px;font-size:8.5px;font-weight:bold;color:#3a3a3a">shape0</div>
<div class="abs" style="left:384.3px;top:69.5px;font-size:8.5px;font-weight:bold;color:#3a3a3a">s</div>
<div class="abs" style="left:92.7px;top:68.5px;width:1px;height:9px;background:#d8d8d8"></div>
<div class="abs" style="left:186px;top:68.5px;width:1px;height:9px;background:#d8d8d8"></div>
<div class="abs" style="left:280px;top:68.5px;width:1px;height:9px;background:#d8d8d8"></div>
<div class="abs" style="left:373.3px;top:68.5px;width:1px;height:9px;background:#d8d8d8"></div>
<div class="abs" style="left:398.8px;top:69.5px;font-size:8.5px;font-weight:bold;color:#3a3a3a">Action</div>
<div class="abs" style="left:0;top:88px;width:435.5px;height:1px;background:#e6e6e6"></div>
<div class="abs" style="left:10px;top:94px;width:56.5px;height:19.3px;border:1px solid #e2e2e2;border-radius:3px;background:#fff"></div>
<div class="abs" style="left:74.5px;top:99.5px"><svg style="display:block" width="10" height="7" viewBox="0 0 10 7"><path d="M0.5 0.8 H9.5 M2 3.5 H8 M3.7 6.2 H6.3" stroke="#444" stroke-width="1.1"/></svg></div>
<div class="abs" style="left:103.6px;top:94px;width:56.5px;height:19.3px;border:1px solid #e2e2e2;border-radius:3px;background:#fff"></div>
<div class="abs" style="left:168.1px;top:99.5px"><svg style="display:block" width="10" height="7" viewBox="0 0 10 7"><path d="M0.5 0.8 H9.5 M2 3.5 H8 M3.7 6.2 H6.3" stroke="#444" stroke-width="1.1"/></svg></div>
<div class="abs" style="left:197.4px;top:94px;width:56.5px;height:19.3px;border:1px solid #e2e2e2;border-radius:3px;background:#fff"></div>
<div class="abs" style="left:261.9px;top:99.5px"><svg style="display:block" width="10" height="7" viewBox="0 0 10 7"><path d="M0.5 0.8 H9.5 M2 3.5 H8 M3.7 6.2 H6.3" stroke="#444" stroke-width="1.1"/></svg></div>
<div class="abs" style="left:290.8px;top:94px;width:56.5px;height:19.3px;border:1px solid #e2e2e2;border-radius:3px;background:#fff"></div>
<div class="abs" style="left:355.3px;top:99.5px"><svg style="display:block" width="10" height="7" viewBox="0 0 10 7"><path d="M0.5 0.8 H9.5 M2 3.5 H8 M3.7 6.2 H6.3" stroke="#444" stroke-width="1.1"/></svg></div>
<div class="abs" style="left:384.8px;top:94px;width:4.5px;height:19.3px;border:1px solid #e2e2e2;border-right:none;border-radius:3px 0 0 3px;background:#fff"></div>
<div class="abs" style="left:0;top:118px;width:435.5px;height:1px;background:#e6e6e6"></div>
<div class="abs" style="left:0;top:144.2px;width:435px;height:1px;background:#e8e8e8"></div>
<div class="td" style="left:10px;top:126.5px">reservoir</div>
<div class="td" style="left:197.4px;top:126.5px">Solitare Lake</div>
<div class="td" style="left:290.8px;top:126.5px">united_states_of_...</div>
<div class="td" style="left:383.5px;top:126.5px;color:#777;width:5.5px;overflow:hidden">C</div>
<div class="abs" style="left:404px;top:122.5px"><svg style="display:block" width="17" height="14" viewBox="0 0 17 14"><circle cx="5.8" cy="5.5" r="4.6" fill="none" stroke="#1a1a1a" stroke-width="1.4"/><path d="M5.8 3.2 V7.8 M3.5 5.5 H8.1" stroke="#1a1a1a" stroke-width="1.3"/><path d="M9.3 8.8 L14.8 13.2" stroke="#1a1a1a" stroke-width="3"/><path d="M10.3 9.6 L14.3 12.8" stroke="#fff" stroke-width="1"/></svg></div>
<div class="abs" style="left:0;top:170.5px;width:435px;height:1px;background:#e8e8e8"></div>
<div class="td" style="left:10px;top:152.8px">reservoir</div>
<div class="td" style="left:197.4px;top:152.8px">Evans Log Ponds</div>
<div class="td" style="left:290.8px;top:152.8px">united_states_of_...</div>
<div class="td" style="left:383.5px;top:152.8px;color:#777;width:5.5px;overflow:hidden">C</div>
<div class="abs" style="left:404px;top:148.8px"><svg style="display:block" width="17" height="14" viewBox="0 0 17 14"><circle cx="5.8" cy="5.5" r="4.6" fill="none" stroke="#1a1a1a" stroke-width="1.4"/><path d="M5.8 3.2 V7.8 M3.5 5.5 H8.1" stroke="#1a1a1a" stroke-width="1.3"/><path d="M9.3 8.8 L14.8 13.2" stroke="#1a1a1a" stroke-width="3"/><path d="M10.3 9.6 L14.3 12.8" stroke="#fff" stroke-width="1"/></svg></div>
<div class="abs" style="left:0;top:171.39999999999998px;width:435px;height:25.2px;background:#e3f0fc"></div>
<div class="abs" style="left:0;top:196.59999999999997px;width:435px;height:1px;background:#e8e8e8"></div>
<div class="td" style="left:10px;top:178.89999999999998px">reservoir</div>
<div class="td" style="left:197.4px;top:178.89999999999998px">Pistol River Log P...</div>
<div class="td" style="left:290.8px;top:178.89999999999998px">united_states_of_...</div>
<div class="td" style="left:383.5px;top:178.89999999999998px;color:#777;width:5.5px;overflow:hidden">C</div>
<div class="abs" style="left:404px;top:174.89999999999998px"><svg style="display:block" width="17" height="14" viewBox="0 0 17 14"><circle cx="5.8" cy="5.5" r="4.6" fill="none" stroke="#1a1a1a" stroke-width="1.4"/><path d="M5.8 3.2 V7.8 M3.5 5.5 H8.1" stroke="#1a1a1a" stroke-width="1.3"/><path d="M9.3 8.8 L14.8 13.2" stroke="#1a1a1a" stroke-width="3"/><path d="M10.3 9.6 L14.3 12.8" stroke="#fff" stroke-width="1"/></svg></div>
<div class="abs" style="left:0;top:222.8px;width:435px;height:1px;background:#e8e8e8"></div>
<div class="td" style="left:10px;top:205.10000000000002px">reservoir</div>
<div class="td" style="left:197.4px;top:205.10000000000002px">Rosenberg Reser...</div>
<div class="td" style="left:290.8px;top:205.10000000000002px">united_states_of_...</div>
<div class="td" style="left:383.5px;top:205.10000000000002px;color:#777;width:5.5px;overflow:hidden">C</div>
<div class="abs" style="left:404px;top:201.10000000000002px"><svg style="display:block" width="17" height="14" viewBox="0 0 17 14"><circle cx="5.8" cy="5.5" r="4.6" fill="none" stroke="#1a1a1a" stroke-width="1.4"/><path d="M5.8 3.2 V7.8 M3.5 5.5 H8.1" stroke="#1a1a1a" stroke-width="1.3"/><path d="M9.3 8.8 L14.8 13.2" stroke="#1a1a1a" stroke-width="3"/><path d="M10.3 9.6 L14.3 12.8" stroke="#fff" stroke-width="1"/></svg></div>
<div class="abs" style="left:0;top:249.0px;width:435px;height:1px;background:#e8e8e8"></div>
<div class="td" style="left:10px;top:231.3px">reservoir</div>
<div class="td" style="left:197.4px;top:231.3px">Klose Pond</div>
<div class="td" style="left:290.8px;top:231.3px">united_states_of_...</div>
<div class="td" style="left:383.5px;top:231.3px;color:#777;width:5.5px;overflow:hidden">C</div>
<div class="abs" style="left:404px;top:227.3px"><svg style="display:block" width="17" height="14" viewBox="0 0 17 14"><circle cx="5.8" cy="5.5" r="4.6" fill="none" stroke="#1a1a1a" stroke-width="1.4"/><path d="M5.8 3.2 V7.8 M3.5 5.5 H8.1" stroke="#1a1a1a" stroke-width="1.3"/><path d="M9.3 8.8 L14.8 13.2" stroke="#1a1a1a" stroke-width="3"/><path d="M10.3 9.6 L14.3 12.8" stroke="#fff" stroke-width="1"/></svg></div>
<div class="abs" style="left:0;top:275.2px;width:435px;height:1px;background:#e8e8e8"></div>
<div class="td" style="left:10px;top:257.5px">reservoir</div>
<div class="td" style="left:197.4px;top:257.5px">Steppe Reservoir</div>
<div class="td" style="left:290.8px;top:257.5px">united_states_of_...</div>
<div class="td" style="left:383.5px;top:257.5px;color:#777;width:5.5px;overflow:hidden">C</div>
<div class="abs" style="left:404px;top:253.5px"><svg style="display:block" width="17" height="14" viewBox="0 0 17 14"><circle cx="5.8" cy="5.5" r="4.6" fill="none" stroke="#1a1a1a" stroke-width="1.4"/><path d="M5.8 3.2 V7.8 M3.5 5.5 H8.1" stroke="#1a1a1a" stroke-width="1.3"/><path d="M9.3 8.8 L14.8 13.2" stroke="#1a1a1a" stroke-width="3"/><path d="M10.3 9.6 L14.3 12.8" stroke="#fff" stroke-width="1"/></svg></div>
<div class="abs" style="left:0;top:301.4px;width:435px;height:1px;background:#e8e8e8"></div>
<div class="td" style="left:10px;top:283.7px">reservoir</div>
<div class="td" style="left:197.4px;top:283.7px">Aqua Fria Reserv...</div>
<div class="td" style="left:290.8px;top:283.7px">united_states_of_...</div>
<div class="td" style="left:383.5px;top:283.7px;color:#777;width:5.5px;overflow:hidden">C</div>
<div class="abs" style="left:404px;top:279.7px"><svg style="display:block" width="17" height="14" viewBox="0 0 17 14"><circle cx="5.8" cy="5.5" r="4.6" fill="none" stroke="#1a1a1a" stroke-width="1.4"/><path d="M5.8 3.2 V7.8 M3.5 5.5 H8.1" stroke="#1a1a1a" stroke-width="1.3"/><path d="M9.3 8.8 L14.8 13.2" stroke="#1a1a1a" stroke-width="3"/><path d="M10.3 9.6 L14.3 12.8" stroke="#fff" stroke-width="1"/></svg></div>
<div class="abs" style="left:0;top:327.59999999999997px;width:435px;height:1px;background:#e8e8e8"></div>
<div class="td" style="left:10px;top:309.9px">reservoir</div>
<div class="td" style="left:197.4px;top:309.9px">Daily Reservoir</div>
<div class="td" style="left:290.8px;top:309.9px">united_states_of_...</div>
<div class="td" style="left:383.5px;top:309.9px;color:#777;width:5.5px;overflow:hidden">C</div>
<div class="abs" style="left:404px;top:305.9px"><svg style="display:block" width="17" height="14" viewBox="0 0 17 14"><circle cx="5.8" cy="5.5" r="4.6" fill="none" stroke="#1a1a1a" stroke-width="1.4"/><path d="M5.8 3.2 V7.8 M3.5 5.5 H8.1" stroke="#1a1a1a" stroke-width="1.3"/><path d="M9.3 8.8 L14.8 13.2" stroke="#1a1a1a" stroke-width="3"/><path d="M10.3 9.6 L14.3 12.8" stroke="#fff" stroke-width="1"/></svg></div>
<div class="abs" style="left:404px;top:332.1px"><svg style="display:block" width="17" height="14" viewBox="0 0 17 14"><circle cx="5.8" cy="5.5" r="4.6" fill="none" stroke="#1a1a1a" stroke-width="1.4"/><path d="M5.8 3.2 V7.8 M3.5 5.5 H8.1" stroke="#1a1a1a" stroke-width="1.3"/><path d="M9.3 8.8 L14.8 13.2" stroke="#1a1a1a" stroke-width="3"/><path d="M10.3 9.6 L14.3 12.8" stroke="#fff" stroke-width="1"/></svg></div>
<div class="abs" style="left:389px;top:58px;width:1px;height:292px;background:#e0e0e0"></div>
<div class="abs" style="left:0;top:337px;width:449px;height:14px;background:#fff"></div>
<div class="abs" style="left:0;top:338.6px;width:389px;height:11.2px;background:#f1f1f1"></div>
<div class="abs" style="left:13px;top:339.3px;width:251px;height:10px;background:#c1c1c1"></div>
<svg class="abs" style="left:4px;top:341px" width="5" height="7"><path d="M4 0.5 L0.8 3.5 L4 6.5 Z" fill="#a3a3a3"/></svg>
<svg class="abs" style="left:380px;top:341px" width="5" height="7"><path d="M1 0.5 L4.2 3.5 L1 6.5 Z" fill="#505050"/></svg>
<div class="abs" style="left:389px;top:338.6px;width:60px;height:11.2px;background:#f1f1f1;border-left:1px solid #e0e0e0"></div>
<svg class="abs" style="left:393px;top:341px" width="5" height="7"><path d="M4 0.5 L0.8 3.5 L4 6.5 Z" fill="#a3a3a3"/></svg>
<svg class="abs" style="left:440px;top:341px" width="5" height="7"><path d="M1 0.5 L4.2 3.5 L1 6.5 Z" fill="#a3a3a3"/></svg>
<div class="abs" style="left:435px;top:119px;width:13.5px;height:219px;background:#f1f1f1"></div>
<svg class="abs" style="left:437.5px;top:123px" width="9" height="6"><path d="M0.5 5 L4.5 1 L8.5 5 Z" fill="#a3a3a3"/></svg>
<div class="abs" style="left:436.7px;top:132px;width:10.2px;height:12px;background:#c1c1c1"></div>
<svg class="abs" style="left:437.5px;top:327px" width="9" height="6"><path d="M0.5 1 L4.5 5 L8.5 1 Z" fill="#505050"/></svg>
<div class="abs" style="left:0;top:351px;width:449px;height:35px;background:#1b5aa8;border-radius:5px 5px 0 0"></div>
<div class="abs" style="left:9px;top:369.2px;font-size:8.8px;color:#fff">Items per Page: 200</div>
<div class="abs" style="left:270px;top:364.5px;width:90px;text-align:center;font-size:9.3px;color:#fff;line-height:10.8px">1 - 200 of<br>25140 entries</div>
<div class="abs" style="left:359.5px;top:369.3px;font-size:8.3px;font-weight:bold;color:#8fa9d3">PREV</div>
<div class="abs" style="left:392px;top:369px;font-size:9.3px;color:#fff">1</div>
<div class="abs" style="left:407.5px;top:369.3px;font-size:8.3px;font-weight:bold;color:#fff">NEXT</div>
</div>

</body></html>
